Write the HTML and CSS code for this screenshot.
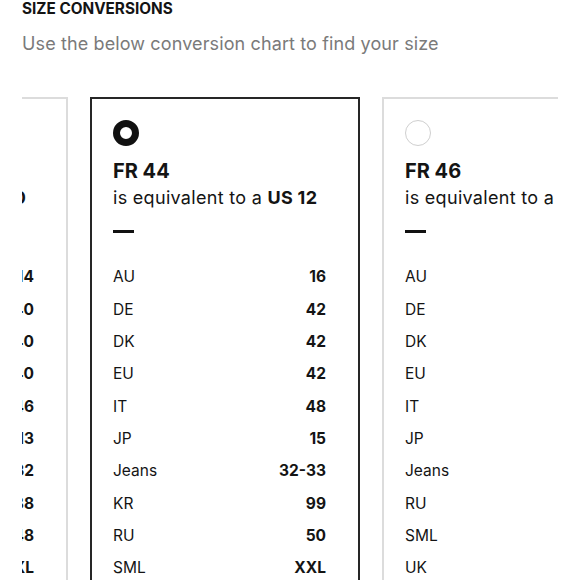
FILE: index.html
```html
<!DOCTYPE html>
<html>
<head>
<meta charset="utf-8">
<link rel="stylesheet" href="styles.css">
</head>
<body>
<header class="intro">
  <h1 class="title">SIZE CONVERSIONS</h1>
  <p class="subtitle">Use the below conversion chart to find your size</p>
</header>
<div class="strip">
  <div class="track">
    <section class="card">
      <span class="radio"></span>
      <h2 class="size">FR 42</h2>
      <p class="equiv">is equivalent to a <b>US 10</b></p>
      <span class="dash"></span>
      <dl class="rows">
        <div class="row"><dt>AU</dt><dd>14</dd></div>
        <div class="row"><dt>DE</dt><dd>40</dd></div>
        <div class="row"><dt>DK</dt><dd>40</dd></div>
        <div class="row"><dt>EU</dt><dd>40</dd></div>
        <div class="row"><dt>IT</dt><dd>46</dd></div>
        <div class="row"><dt>JP</dt><dd>13</dd></div>
        <div class="row"><dt>Jeans</dt><dd>31-32</dd></div>
        <div class="row"><dt>KR</dt><dd>88</dd></div>
        <div class="row"><dt>RU</dt><dd>48</dd></div>
        <div class="row"><dt>SML</dt><dd>XL</dd></div>
        <div class="row"><dt>UK</dt><dd>14</dd></div>
      </dl>
    </section>
    <section class="card selected">
      <span class="radio"></span>
      <h2 class="size">FR 44</h2>
      <p class="equiv">is equivalent to a <b>US 12</b></p>
      <span class="dash"></span>
      <dl class="rows">
        <div class="row"><dt>AU</dt><dd>16</dd></div>
        <div class="row"><dt>DE</dt><dd>42</dd></div>
        <div class="row"><dt>DK</dt><dd>42</dd></div>
        <div class="row"><dt>EU</dt><dd>42</dd></div>
        <div class="row"><dt>IT</dt><dd>48</dd></div>
        <div class="row"><dt>JP</dt><dd>15</dd></div>
        <div class="row"><dt>Jeans</dt><dd>32-33</dd></div>
        <div class="row"><dt>KR</dt><dd>99</dd></div>
        <div class="row"><dt>RU</dt><dd>50</dd></div>
        <div class="row"><dt>SML</dt><dd>XXL</dd></div>
        <div class="row"><dt>UK</dt><dd>16</dd></div>
      </dl>
    </section>
    <section class="card">
      <span class="radio"></span>
      <h2 class="size">FR 46</h2>
      <p class="equiv">is equivalent to a <b>US 14</b></p>
      <span class="dash"></span>
      <dl class="rows">
        <div class="row"><dt>AU</dt><dd>18</dd></div>
        <div class="row"><dt>DE</dt><dd>44</dd></div>
        <div class="row"><dt>DK</dt><dd>44</dd></div>
        <div class="row"><dt>EU</dt><dd>44</dd></div>
        <div class="row"><dt>IT</dt><dd>50</dd></div>
        <div class="row"><dt>JP</dt><dd>17</dd></div>
        <div class="row"><dt>Jeans</dt><dd>34</dd></div>
        <div class="row"><dt>RU</dt><dd>52</dd></div>
        <div class="row"><dt>SML</dt><dd>XXL</dd></div>
        <div class="row"><dt>UK</dt><dd>18</dd></div>
      </dl>
    </section>
  </div>
</div>
</body>
</html>
```
FILE: styles.css
```css
* { box-sizing: border-box; }
html, body { margin: 0; padding: 0; background: #fff; }
body {
  font-family: "Inter", "Liberation Sans", sans-serif;
  color: #141414;
  width: 580px;
  height: 580px;
  overflow: hidden;
}
.intro { padding: 0 22px; }
.title {
  margin: 0;
  font-size: 15.3px;
  line-height: 17px;
  font-weight: 700;
}
.subtitle {
  margin: 16px 0 0;
  font-size: 18px;
  line-height: 22px;
  color: #7a7a7a;
  letter-spacing: 0.12px;
}
.strip {
  margin: 42px 22px 0;
  overflow: hidden;
}
.track {
  display: flex;
  gap: 22px;
  margin-left: -224px;
}
.card {
  flex: 0 0 270px;
  width: 270px;
  height: 600px;
  border: 2px solid #dcdcdc;
  padding: 21px 32px 0 21px;
}
.card.selected { border-color: #262626; }
.radio {
  display: block;
  width: 26px;
  height: 26px;
  border-radius: 50%;
  border: 1.5px solid #cfcfcf;
}
.selected .radio { border: 7px solid #111; }
.size {
  margin: 13px 0 0;
  font-size: 20px;
  line-height: 24px;
  font-weight: 700;
}
.equiv {
  margin: 3px 0 0;
  font-size: 18px;
  line-height: 24px;
  letter-spacing: 0.3px;
  white-space: nowrap;
}
.equiv b { font-weight: 700; }
.dash {
  display: block;
  width: 21px;
  height: 2.5px;
  background: #111;
  margin-top: 20px;
}
.rows { margin: 28px 0 0; }
.row {
  display: flex;
  justify-content: space-between;
  height: 32.35px;
  align-items: center;
  font-size: 15.5px;
}
.row dt { margin: 0; }
.row dd { margin: 0; font-weight: 700; }
```
